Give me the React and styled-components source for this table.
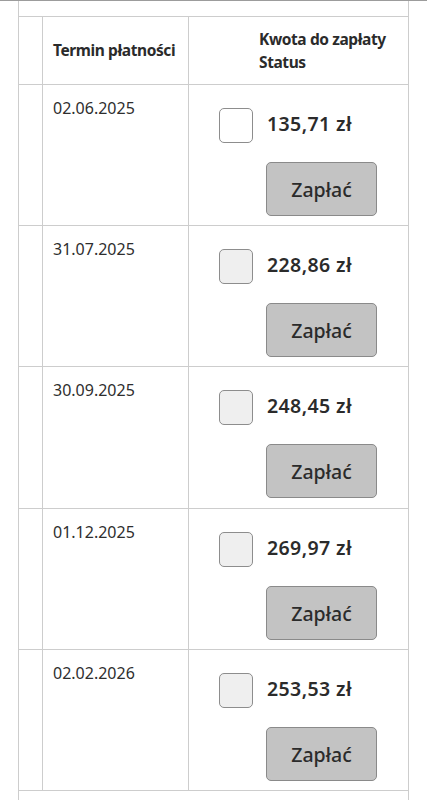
import React from "react";
import styled, { createGlobalStyle } from "styled-components";

const Global = createGlobalStyle`
  html, body { margin: 0; padding: 0; background: #fff; }
  body { font-family: "Noto Sans", "Open Sans", sans-serif; color: #2b2b2b; }
`;

const Page = styled.div`
  border-top: 1px solid #9c9c9c;
  padding: 0 18px 0 18px;
  width: 427px;
  box-sizing: border-box;
`;

const Table = styled.table`
  border-collapse: collapse;
  table-layout: fixed;
  width: 390px;
  border-left: 1px solid #cdcdcd;
  border-right: 1px solid #cdcdcd;
`;

const SpacerCell = styled.td`
  height: ${(p) => p.$h}px;
  padding: 0;
  border-bottom: ${(p) => (p.$noBottom ? "none" : "1px solid #cdcdcd")};
`;

const HeadCell = styled.th`
  height: 67px;
  padding: 0 0 0 ${(p) => p.$pl || 0}px;
  text-align: left;
  vertical-align: middle;
  font-size: 15.5px;
  font-weight: 700;
  letter-spacing: -0.4px;
  line-height: 23px;
  color: #2b2b2b;
  border-left: 1px solid #cdcdcd;
  border-bottom: 1px solid #cdcdcd;
  &:first-child { border-left: none; }
`;

const Cell = styled.td`
  height: ${(p) => p.$h || 140}px;
  padding: 0;
  vertical-align: top;
  border-left: 1px solid #cdcdcd;
  border-bottom: 1px solid #cdcdcd;
  &:first-child { border-left: none; }
`;

const DateText = styled.div`
  padding: 12px 0 0 10px;
  font-size: 16px;
  line-height: 22px;
  color: #2e2e2e;
`;

const PayBox = styled.div`
  display: flex;
  flex-direction: column;
  padding: 23px 31px 0 30px;
  gap: 19px;
`;

const AmountRow = styled.div`
  display: flex;
  align-items: center;
  gap: 14px;
`;

const Check = styled.span`
  display: block;
  width: 34px;
  height: 35px;
  box-sizing: border-box;
  border: 1.5px solid #8d8d8d;
  border-radius: 5px;
  background: ${(p) => (p.$active ? "#ffffff" : "#efefef")};
`;

const Amount = styled.span`
  font-size: 19.5px;
  font-weight: 600;
  color: #2b2b2b;
  letter-spacing: 0.4px;
  padding-bottom: 4px;
`;

const PayButton = styled.button`
  align-self: flex-end;
  width: 111px;
  height: 54px;
  box-sizing: border-box;
  background: #c3c3c3;
  border: 1px solid #8a8a8a;
  border-radius: 5px;
  font-family: inherit;
  font-size: 19.5px;
  font-weight: 500;
  color: #2b2b2b;
  padding: 0;
`;

const rows = [
  { date: "02.06.2025", amount: "135,71 zł", active: true },
  { date: "31.07.2025", amount: "228,86 zł" },
  { date: "30.09.2025", amount: "248,45 zł", h: 141 },
  { date: "01.12.2025", amount: "269,97 zł" },
  { date: "02.02.2026", amount: "253,53 zł" },
];

export default function App() {
  return (
    <Page>
      <Global />
      <Table>
        <colgroup>
          <col style={{ width: 24 }} />
          <col style={{ width: 146 }} />
          <col style={{ width: 220 }} />
        </colgroup>
        <tbody>
          <tr>
            <SpacerCell colSpan={3} $h={15} />
          </tr>
          <tr>
            <HeadCell />
            <HeadCell $pl={10}>Termin płatności</HeadCell>
            <HeadCell $pl={70}>
              Kwota do zapłaty
              <br />
              Status
            </HeadCell>
          </tr>
          {rows.map((r) => (
            <tr key={r.date}>
              <Cell $h={r.h} />
              <Cell $h={r.h}>
                <DateText>{r.date}</DateText>
              </Cell>
              <Cell $h={r.h}>
                <PayBox>
                  <AmountRow>
                    <Check $active={r.active} />
                    <Amount>{r.amount}</Amount>
                  </AmountRow>
                  <PayButton type="button">Zapłać</PayButton>
                </PayBox>
              </Cell>
            </tr>
          ))}
          <tr>
            <SpacerCell colSpan={3} $h={20} $noBottom />
          </tr>
        </tbody>
      </Table>
    </Page>
  );
}
